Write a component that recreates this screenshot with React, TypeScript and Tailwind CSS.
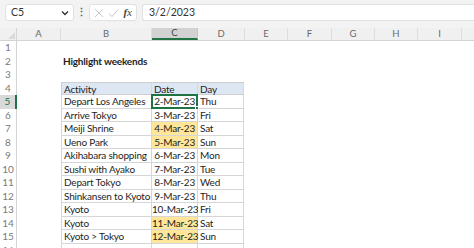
import React from "react";

const cols = [
  { l: "A", w: 44 },
  { l: "B", w: 91 },
  { l: "C", w: 46 },
  { l: "D", w: 47 },
  { l: "E", w: 43 },
  { l: "F", w: 44 },
  { l: "G", w: 43 },
  { l: "H", w: 43 },
  { l: "I", w: 44 },
  { l: "J", w: 44 },
];

const data: [string, string, string, boolean][] = [
  ["Depart Los Angeles", "2-Mar-23", "Thu", false],
  ["Arrive Tokyo", "3-Mar-23", "Fri", false],
  ["Meiji Shrine", "4-Mar-23", "Sat", true],
  ["Ueno Park", "5-Mar-23", "Sun", true],
  ["Akihabara shopping", "6-Mar-23", "Mon", false],
  ["Sushi with Ayako", "7-Mar-23", "Tue", false],
  ["Depart Tokyo", "8-Mar-23", "Wed", false],
  ["Shinkansen to Kyoto", "9-Mar-23", "Thu", false],
  ["Kyoto", "10-Mar-23", "Fri", false],
  ["Kyoto", "11-Mar-23", "Sat", true],
  ["Kyoto > Tokyo", "12-Mar-23", "Sun", true],
  ["", "", "", false],
];

const font = { fontFamily: "Lato, 'Open Sans', sans-serif" };

function RowHead({ n, active }: { n: number; active?: boolean }) {
  return (
    <div
      className={
        "w-[17px] shrink-0 flex items-center justify-center text-[10px] border-r " +
        (active ? "bg-[#d9d9d9] text-[#217346] border-r-2 border-[#217346]" : "text-[#7a7a7a] border-[#d4d4d4]")
      }
    >
      {n}
    </div>
  );
}

export default function App() {
  return (
    <div className="w-[474px] h-[248px] overflow-hidden bg-white text-[#1e1e1e]" style={font}>
      {/* formula bar */}
      <div className="h-[28px] bg-[#f3f3f3] flex items-start pt-[4px] pl-[5px]">
        <div className="w-[69px] h-[17px] shrink-0 bg-white border border-[#e1e1e1] rounded-[3px] flex items-center pl-[5px] pr-[4px] text-[10.5px] text-[#333]">
          <span className="flex-1">C5</span>
          <svg width="8" height="6" viewBox="0 0 8 6" className="mt-[1px]">
            <path d="M1 1.5 L4 4.5 L7 1.5" fill="none" stroke="#333" strokeWidth="1.4" />
          </svg>
        </div>
        <div className="w-[15px] h-[17px] shrink-0 flex items-center justify-center text-[#666] text-[11px] font-bold">⋮</div>
        <div className="w-[48px] h-[17px] shrink-0 bg-white border border-[#e1e1e1] rounded-[3px] flex items-center justify-between px-[4px]">
          <svg width="10" height="10" viewBox="0 0 10 10">
            <path d="M1 1 L9 9 M9 1 L1 9" stroke="#c8c8c8" strokeWidth="1" />
          </svg>
          <svg width="11" height="10" viewBox="0 0 11 10">
            <path d="M1 5.5 L4 8.5 L10 1.5" fill="none" stroke="#c8c8c8" strokeWidth="1" />
          </svg>
          <span className="text-[11px] italic text-[#444]" style={{ fontFamily: "'Liberation Serif', serif" }}>
            <b>f</b>x
          </span>
        </div>
        <div className="ml-[5px] flex-1 min-w-0 h-[17px] bg-white border border-r-0 border-[#e1e1e1] rounded-l-[3px] flex items-center pl-[6px] text-[10.5px] text-[#333]">
          3/2/2023
        </div>
      </div>

      {/* column headers */}
      <div className="flex h-[13px] bg-[#f0f0f0] border-b border-[#d4d4d4]">
        <div className="w-[17px] shrink-0 border-r border-[#d4d4d4] relative">
          <div className="absolute right-[1px] bottom-[1px] w-0 h-0 border-l-[7px] border-l-transparent border-b-[7px] border-b-[#dadada]" />
        </div>
        {cols.map((c) => (
          <div
            key={c.l}
            style={{ width: c.w }}
            className={
              "shrink-0 flex items-center justify-center text-[9.5px] border-r " +
              (c.l === "C"
                ? "bg-[#d2d2d2] text-[#444] border-b-2 border-b-[#217346] border-r-[#c6c6c6]"
                : "text-[#6a6a6a] border-[#dedede]")
            }
          >
            {c.l}
          </div>
        ))}
      </div>

      {/* rows 1-3 */}
      {[1, 2, 3].map((n) => (
        <div key={n} className="flex h-[13.5px]">
          <RowHead n={n} />
          <div className="w-[44px] shrink-0" />
          <div className="w-[136px] shrink-0 pl-[2px] text-[10px] tracking-[-0.2px] font-bold leading-[13.5px] whitespace-nowrap">
            {n === 2 ? "Highlight weekends" : ""}
          </div>
        </div>
      ))}

      {/* row 4 header */}
      <div className="flex h-[13.5px]">
        <RowHead n={4} />
        <div className="w-[44px] shrink-0" />
        <div className="flex bg-[#dde7f3] border-b border-t border-l border-[#cfcfcf] text-[10px] tracking-[-0.2px] leading-[12px]">
          <div className="w-[90px] pl-[2px] border-r border-[#d6d6d6]">Activity</div>
          <div className="w-[46px] pl-[2px] border-r border-[#d6d6d6]">Date</div>
          <div className="w-[46px] pl-[2px] border-r border-[#d6d6d6]">Day</div>
        </div>
      </div>

      {data.map((r, i) => {
        const n = i + 5;
        const sel = n === 5;
        return (
          <div key={n} className="flex h-[13.5px]">
            <RowHead n={n} active={sel} />
            <div className="w-[44px] shrink-0" />
            <div className="flex border-l border-b border-[#d6d6d6] text-[10px] tracking-[-0.2px] leading-[12.5px] whitespace-nowrap">
              <div className="w-[90px] pl-[2px] border-r border-[#d6d6d6] overflow-hidden">{r[0]}</div>
              <div
                className={
                  "w-[46px] pr-[2px] text-right border-r border-[#d6d6d6] relative " + (r[3] ? "bg-[#ffe699]" : "")
                }
              >
                {r[1]}
                {sel && (
                  <div className="absolute -left-[1px] -top-[1px] -right-[1px] -bottom-[1px] border-2 border-[#217346]">
                    <div className="absolute -right-[3px] -bottom-[3px] w-[4px] h-[4px] bg-[#217346] border border-white" />
                  </div>
                )}
              </div>
              <div className="w-[46px] pl-[2px] border-r border-[#d6d6d6]">{r[2]}</div>
            </div>
          </div>
        );
      })}
    </div>
  );
}
